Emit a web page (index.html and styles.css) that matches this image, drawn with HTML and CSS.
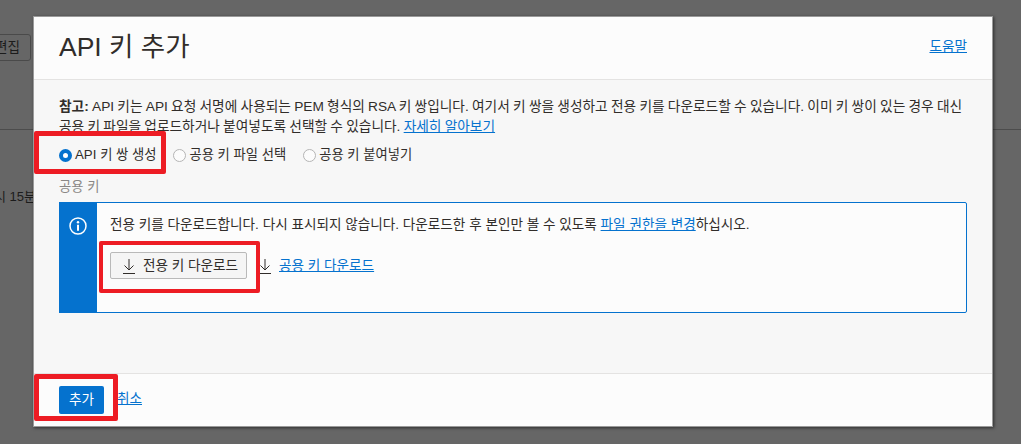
FILE: index.html
```html
<!DOCTYPE html>
<html lang="ko">
<head>
<meta charset="utf-8">
<title>API 키 추가</title>
<link rel="stylesheet" href="styles.css">
</head>
<body>
<div class="backdrop">
  <div class="behind-head"><button class="behind-btn">편집</button></div>
  <div class="behind-body">시 15분</div>
</div>
<section class="modal">
  <header class="modal-head">
    <h1>API 키 추가</h1>
    <a class="link" href="#">도움말</a>
  </header>
  <div class="modal-body">
    <p class="note"><strong>참고:</strong> API 키는 API 요청 서명에 사용되는 PEM 형식의 RSA 키 쌍입니다. 여기서 키 쌍을 생성하고 전용 키를 다운로드할 수 있습니다. 이미 키 쌍이 있는 경우 대신<br>공용 키 파일을 업로드하거나 붙여넣도록 선택할 수 있습니다. <a class="link" href="#">자세히 알아보기</a></p>
    <div class="radios">
      <label class="radio"><span class="dot on"></span>API 키 쌍 생성</label>
      <label class="radio"><span class="dot"></span>공용 키 파일 선택</label>
      <label class="radio"><span class="dot"></span>공용 키 붙여넣기</label>
    </div>
    <div class="field-label">공용 키</div>
    <div class="info">
      <div class="info-side">
        <svg width="18" height="18" viewBox="0 0 18 18" fill="none" stroke="#fff"><circle cx="9" cy="9" r="8" stroke-width="1.5"/><circle cx="9" cy="5.2" r="1.2" fill="#fff" stroke="none"/><path d="M9 7.8v6" stroke-width="2"/></svg>
      </div>
      <div class="info-main">
        <p class="info-text">전용 키를 다운로드합니다. 다시 표시되지 않습니다. 다운로드한 후 본인만 볼 수 있도록 <a class="link" href="#">파일 권한을 변경</a>하십시오.</p>
        <div class="actions">
          <button class="btn">
            <svg class="dl" width="14" height="16" viewBox="0 0 14 16" fill="none" stroke="#312d2a"><path d="M7 1v11M2.500 7.500 7 12l4.500-4.500M1 15.500h12"/></svg>
            전용 키 다운로드
          </button>
          <span class="dl-link">
            <svg class="dl" width="14" height="16" viewBox="0 0 14 16" fill="none" stroke="#312d2a"><path d="M7 1v11M2.500 7.500 7 12l4.500-4.500M1 15.500h12"/></svg>
            <a class="link" href="#">공용 키 다운로드</a>
          </span>
        </div>
      </div>
    </div>
  </div>
  <footer class="modal-foot">
    <button class="primary">추가</button>
    <a class="link" href="#">취소</a>
  </footer>
</section>
<div class="mark mark-radio"></div>
<div class="mark mark-btn"></div>
<div class="mark mark-add"></div>
</body>
</html>
```
FILE: styles.css
```css
* { box-sizing: border-box; }
html, body { margin: 0; height: 100%; }
body {
  width: 1021px;
  height: 444px;
  overflow: hidden;
  position: relative;
  background: #666;
  color: #312d2a;
  font: 13.6px/20px "Liberation Sans", "Noto Sans CJK KR", sans-serif;
}
.backdrop { height: 100%; }
.behind-head {
  height: 130px;
  padding: 34px 0 0;
  border-bottom: 1px solid #4c4c4c;
  margin-left: -10px;
}
.behind-btn {
  width: 41px;
  height: 27px;
  padding: 0 10px 0 0;
  text-align: right;
  background: #666;
  border: 1px solid #4a4a4a;
  border-radius: 3px;
  color: #1c1c1c;
  font: inherit;
}
.behind-body {
  margin: 57px 0 0 -6px;
  color: #1c1c1c;
  font-size: 13px;
}
.modal {
  position: absolute;
  left: 33px;
  top: 16px;
  width: 960px;
  height: 411px;
  display: flex;
  flex-direction: column;
  background: #fcfcfc;
  border: 1px solid #9a9a9a;
  box-shadow: 1px 1px 3px rgba(0,0,0,.55);
}
.modal-head {
  height: 63px;
  flex: none;
  padding: 0 25px 2px;
  display: flex;
  justify-content: space-between;
  align-items: center;
  border-bottom: 1px solid #e4e3e2;
}
.modal-head h1 {
  margin: 0;
  font-size: 26.5px;
  font-weight: 400;
  line-height: 32px;
  color: #312d2a;
}
.modal-body {
  flex: 1;
  background: #f7f7f7;
  padding: 17px 25px 0;
}
.note { margin: 0; line-height: 20px; font-size: 13.7px; word-spacing: -.55px; white-space: nowrap; }
.note strong { font-weight: 700; }
.link { color: #0572ce; text-decoration: underline; }
.radios {
  display: flex;
  gap: 17px;
  margin-top: 8px;
  height: 20px;
}
.radio { display: flex; align-items: center; gap: 3px; font-size: 13.3px; }
.dot {
  width: 13px;
  height: 13px;
  border-radius: 50%;
  border: 1px solid #b5b5b5;
  background: #fcfcfc;
}
.dot.on { border: 4px solid #0572ce; background: #fff; }
.field-label {
  margin-top: 13px;
  font-size: 13.3px;
  line-height: 18px;
  color: #8a8785;
}
.info {
  display: flex;
  height: 111px;
  margin-top: 6px;
  background: #fcfcfc;
  border: 1px solid #0572ce;
  border-radius: 2px;
}
.info-side {
  width: 38px;
  flex: none;
  background: #0572ce;
  display: flex;
  justify-content: center;
  padding-top: 15px;
  margin: -1px 0 -1px -1px;
}
.info-main { padding: 12px 13px; }
.info-text { margin: 0; }
.actions {
  display: flex;
  align-items: center;
  gap: 11px;
  margin-top: 17px;
}
.btn {
  display: flex;
  align-items: center;
  gap: 7px;
  width: 137px;
  height: 27px;
  padding: 0 11px;
  background: #f5f5f5;
  border: 1px solid #b9b9b9;
  border-radius: 2px;
  color: #312d2a;
  font: inherit;
  white-space: nowrap;
}
.dl-link { display: flex; align-items: center; gap: 7px; }
.dl { flex: none; }
.modal-foot {
  height: 53px;
  flex: none;
  padding: 12px 25px 0;
  display: flex;
  align-items: flex-start;
  gap: 13px;
  border-top: 1px solid #e4e3e2;
}
.modal-foot .link { line-height: 26px; }
.primary {
  width: 45px;
  height: 28px;
  padding: 0;
  background: #0572ce;
  border: 0;
  border-radius: 2px;
  color: #fff;
  font: inherit;
}
.mark {
  position: absolute;
  border: 5px solid #ed1c24;
  border-radius: 2px;
}
.mark-radio { left: 34px; top: 131px; width: 132px; height: 43px; }
.mark-btn { left: 99px; top: 241px; width: 161px; height: 52px; border-width: 4px; }
.mark-add { left: 34px; top: 374px; width: 84px; height: 47px; }
```
